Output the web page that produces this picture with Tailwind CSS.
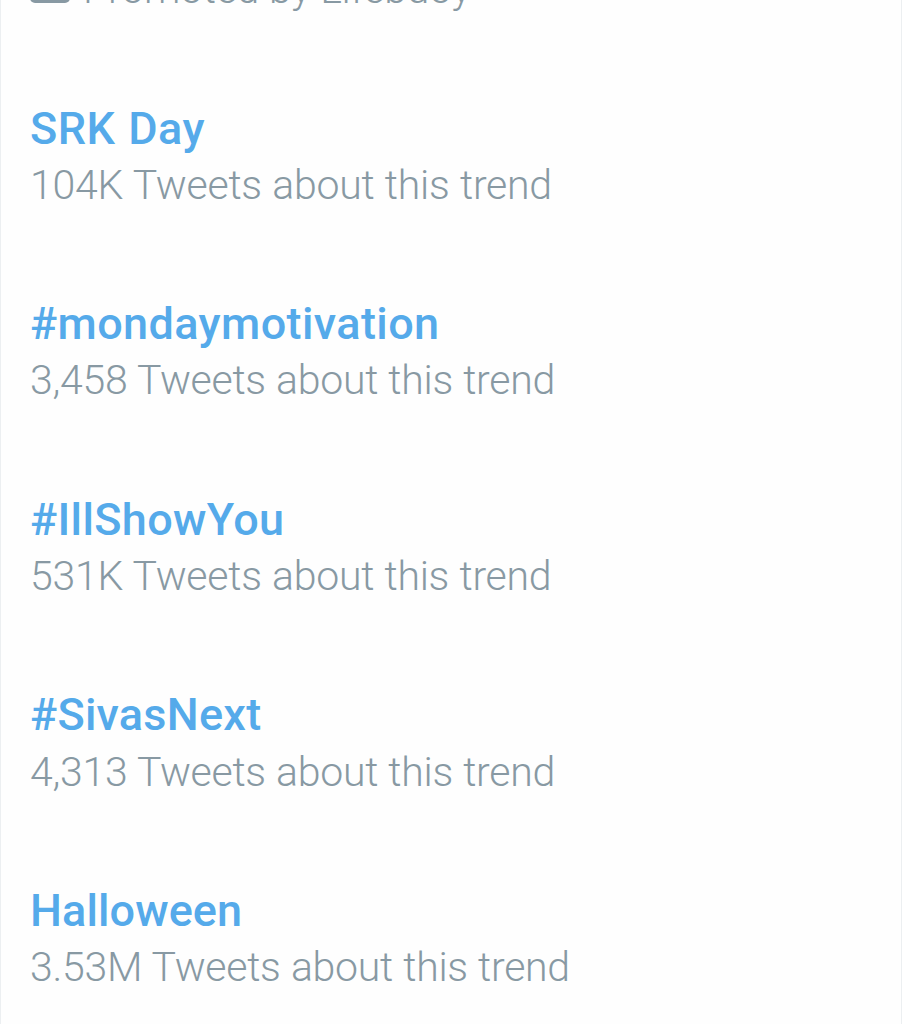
<!DOCTYPE html>
<html lang="en"><head><meta charset="utf-8"><title>Trends</title><script src="https://cdn.jsdelivr.net/npm/@tailwindcss/browser@4"></script></head>
<body class="bg-white">
<main class="h-[1024px] w-[902px] overflow-hidden border-x border-[#eceff1] bg-[#fefefe] pl-[29px] font-['Roboto',sans-serif] text-[#8899a3]">
<div class="-mt-[35px] flex h-[48px] items-start gap-[13px] text-[41px] leading-[48px] font-light tracking-[-0.25px] whitespace-nowrap">
<svg class="-mt-[1px] h-[40px] w-[40px] shrink-0" viewBox="0 0 40 40"><rect width="40" height="39" rx="5" fill="#8899a3"/></svg><p>Promoted by Lifebuoy</p></div>
<ul class="mt-[86px] space-y-[80.5px] whitespace-nowrap">
<li class="h-[115px]"><h2 class="h-[58px] pt-px text-[45px] leading-[57px] font-medium tracking-[0.5px] text-[#55aaea] [word-spacing:1px]">SRK Day</h2><p class="text-[41px] leading-[57px] font-light tracking-[-0.24px] [word-spacing:0.6px]">104K Tweets about this trend</p></li>
<li class="h-[115px]"><h2 class="h-[57px] text-[45px] leading-[57px] font-medium tracking-[0.4px] text-[#55aaea]">#mondaymotivation</h2><p class="text-[41px] leading-[57px] font-light tracking-[-0.29px] [word-spacing:0.6px]">3,458 Tweets about this trend</p></li>
<li class="h-[115px]"><h2 class="h-[58px] pt-px text-[45px] leading-[57px] font-medium tracking-[0.35px] text-[#55aaea]">#IllShowYou</h2><p class="text-[41px] leading-[57px] font-light tracking-[-0.26px] [word-spacing:0.6px]">531K Tweets about this trend</p></li>
<li class="h-[115px]"><h2 class="h-[57px] text-[45px] leading-[57px] font-medium tracking-[0.25px] text-[#55aaea]">#SivasNext</h2><p class="pt-px text-[41px] leading-[57px] font-light tracking-[-0.29px] [word-spacing:0.6px]">4,313 Tweets about this trend</p></li>
<li class="h-[115px]"><h2 class="h-[58px] pt-px text-[45px] leading-[57px] font-medium tracking-[0.1px] text-[#55aaea]">Halloween</h2><p class="text-[41px] leading-[57px] font-light tracking-[-0.28px] [word-spacing:0.6px]">3.53M Tweets about this trend</p></li>
</ul></main></body></html>
